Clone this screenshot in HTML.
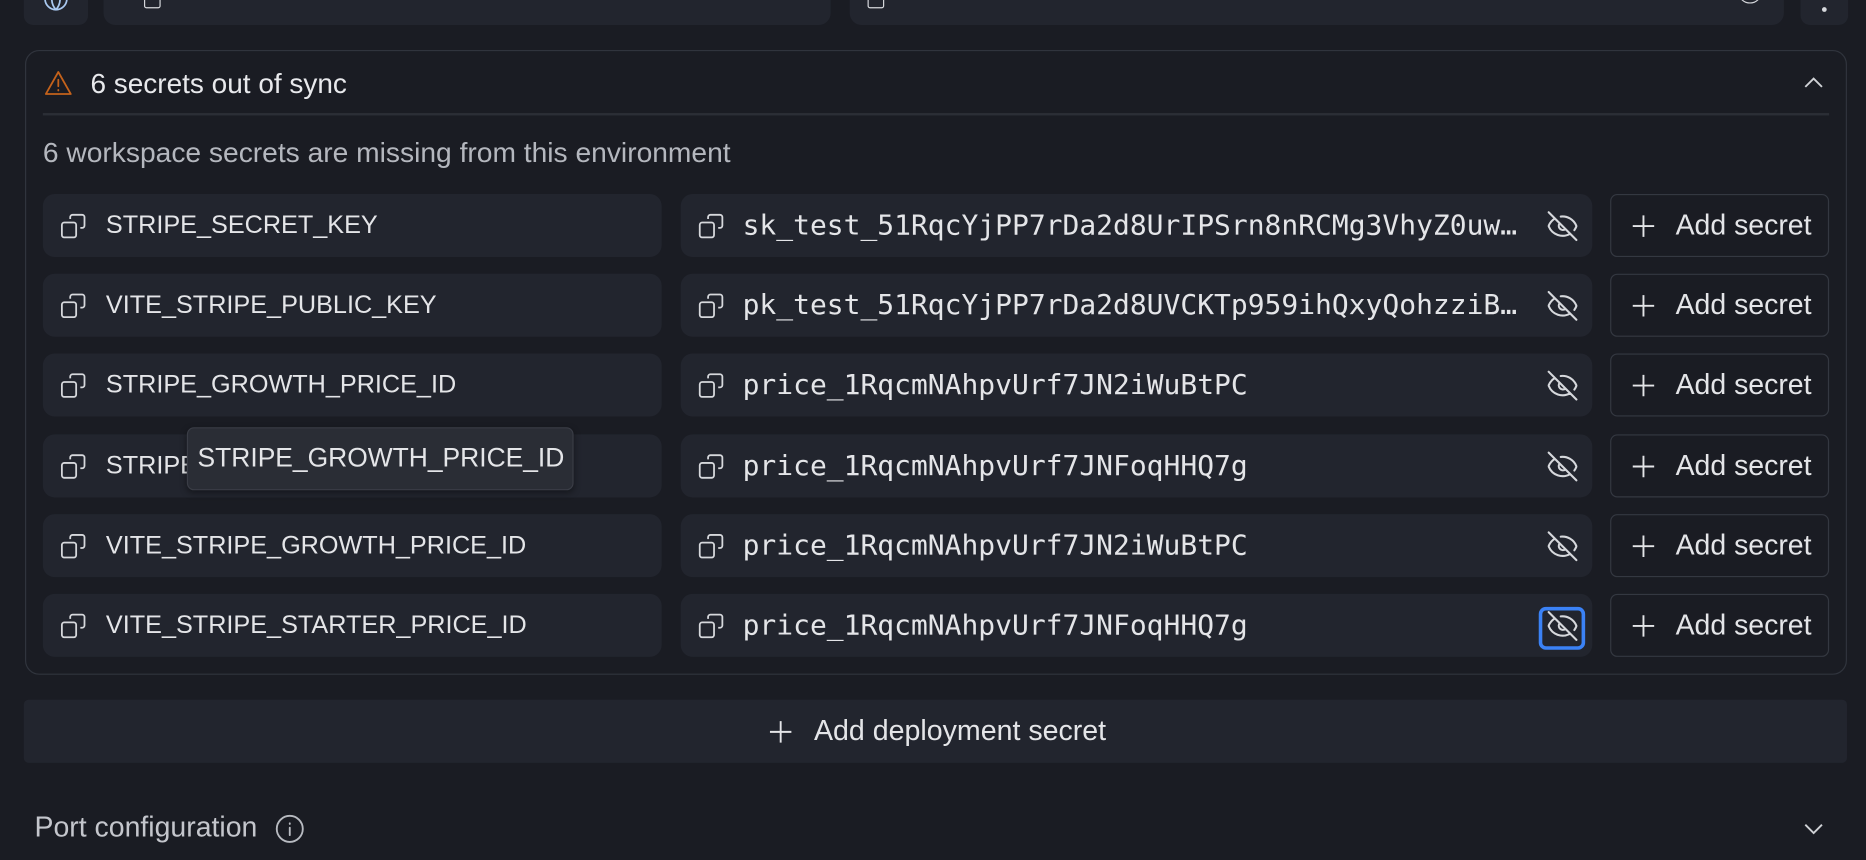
<!DOCTYPE html>
<html><head><meta charset="utf-8"><style>
html,body{margin:0;padding:0;background:#1a1c23;width:1866px;height:860px;overflow:hidden}
#s{position:absolute;left:0;top:0;width:1568px;height:723px;transform:scale(1.19005);transform-origin:0 0;font-family:"Liberation Sans",sans-serif;color:#e4e5e8}
.a{position:absolute}
.box{position:absolute;background:#22252e;border-radius:10px}
.t{position:absolute;white-space:nowrap;font-size:21.2px;line-height:26px}
.mono{font-family:"DejaVu Sans Mono","Liberation Mono",monospace;font-size:23.5px;letter-spacing:0}
.btn{position:absolute;border:1.5px solid #343841;border-radius:6px;box-sizing:border-box;background:#1a1c23}
svg{position:absolute;overflow:visible}
</style></head><body><div id="s">
<div class="box" style="left:20px;top:-20px;width:54px;height:41px;border-radius:8px"></div>
<svg style="left:36px;top:-12px" width="22" height="22" viewBox="0 0 24 24" fill="none" stroke="#a9c8f0" stroke-width="1.6"><circle cx="12" cy="12" r="10"/><path d="M2 12h20M12 2a15 15 0 0 1 0 20M12 2a15 15 0 0 0 0 20"/></svg>
<div class="box" style="left:87px;top:-20px;width:611px;height:41px"></div>
<div class="a" style="left:121px;top:-8px;width:12px;height:13px;border:1.5px solid #d6d8dc;border-radius:2px"></div>
<div class="box" style="left:714px;top:-20px;width:785px;height:41px"></div>
<div class="a" style="left:729px;top:-8px;width:12px;height:13px;border:1.5px solid #d6d8dc;border-radius:2px"></div>
<div class="a" style="left:1461px;top:-8px;width:17px;height:10px;border:1.5px solid #d6d8dc;border-top:none;border-radius:0 0 9px 9px"></div>
<div class="box" style="left:1513px;top:-20px;width:40px;height:41px;border-radius:8px"></div>
<div class="a" style="left:1531px;top:6px;width:4px;height:4px;border-radius:2px;background:#d6d8dc"></div>

<div class="a" style="left:21px;top:42px;width:1531px;height:525px;border:1.5px solid #30343d;border-radius:12px;box-sizing:border-box"></div>
<svg style="left:36px;top:58px" width="26" height="24" viewBox="0 0 24 24" fill="none" stroke="#c4621b" stroke-width="1.5" stroke-linejoin="round"><path d="M12 2.5L22.5 21h-21z"/><path d="M12 9v5.5M12 17.5v.5" stroke-linecap="round"/></svg>
<div class="t" style="left:76px;top:57px;font-size:23.5px;color:#e8e9ec">6 secrets out of sync</div>
<svg style="left:1516px;top:65px" width="16" height="10" viewBox="0 0 16 10" fill="none" stroke="#d0d2d6" stroke-width="1.6"><path d="M1 8l7-7 7 7"/></svg>
<div class="a" style="left:36px;top:95px;width:1501px;height:2px;background:#2b2e36"></div>
<div class="t" style="left:36px;top:116px;font-size:23.7px;color:#b4b7be">6 workspace secrets are missing from this environment</div>

<div id="rows"></div>

<div class="a" style="left:157px;top:359px;width:325px;height:53px;background:#2a2d35;border:1px solid #3a3d46;border-radius:6px;box-sizing:border-box;box-shadow:0 2px 6px rgba(0,0,0,.4)"></div>
<div class="t" style="left:166px;top:372px;font-size:22.2px;color:#e4e5e8">STRIPE_GROWTH_PRICE_ID</div>

<div class="box" style="left:20px;top:588px;width:1532px;height:53px;border-radius:4px"></div>
<svg style="left:646px;top:605px" width="20" height="20" viewBox="0 0 20 20" stroke="#e4e5e8" stroke-width="1.6"><path d="M10 1v18M1 10h18"/></svg>
<div class="t" style="left:684px;top:602px;font-size:24px">Add deployment secret</div>

<div class="t" style="left:29px;top:683px;font-size:23.9px;color:#c4c6cc">Port configuration</div>
<svg style="left:231px;top:684px" width="25" height="25" viewBox="0 0 24 24" fill="none" stroke="#b8bbc1" stroke-width="1.5"><circle cx="12" cy="12" r="10.5"/><path d="M12 11v6M12 7.5v.5" stroke-linecap="round"/></svg>
<svg style="left:1516px;top:691px" width="16" height="10" viewBox="0 0 16 10" fill="none" stroke="#d0d2d6" stroke-width="1.6"><path d="M1 2l7 7 7-7"/></svg>
</div>
<script>
var names=["STRIPE_SECRET_KEY","VITE_STRIPE_PUBLIC_KEY","STRIPE_GROWTH_PRICE_ID","STRIPE_STARTER_PRICE_ID","VITE_STRIPE_GROWTH_PRICE_ID","VITE_STRIPE_STARTER_PRICE_ID"];
var vals=["sk_test_51RqcYjPP7rDa2d8UrIPSrn8nRCMg3VhyZ0uw…","pk_test_51RqcYjPP7rDa2d8UVCKTp959ihQxyQohzziB…","price_1RqcmNAhpvUrf7JN2iWuBtPC","price_1RqcmNAhpvUrf7JNFoqHHQ7g","price_1RqcmNAhpvUrf7JN2iWuBtPC","price_1RqcmNAhpvUrf7JNFoqHHQ7g"];
var copy='<svg width="24" height="24" viewBox="0 0 24 24" fill="none" stroke="#d6d8dc" stroke-width="1.5" style="position:absolute;LEFT;TOP"><rect x="2" y="9" width="12" height="12.5" rx="2"/><path d="M9 6V4.5A2 2 0 0 1 11 2.5h8a2 2 0 0 1 2 2v7a2 2 0 0 1-2 2h-1.5"/></svg>';
var h="";
for(var i=0;i<6;i++){
 var y=163+Math.round(i*67.2);
 h+='<div class="box" style="left:36px;top:'+y+'px;width:520px;height:53px"></div>';
 h+=copy.replace("LEFT","left:50px").replace("TOP","top:"+(y+15)+"px");
 h+='<div class="t" style="left:89px;top:'+(y+14)+'px">'+names[i]+'</div>';
 h+='<div class="box" style="left:572px;top:'+y+'px;width:766px;height:53px"></div>';
 h+=copy.replace("LEFT","left:586px").replace("TOP","top:"+(y+15)+"px");
 h+='<div class="t mono" style="left:624px;top:'+(y+12)+'px;line-height:28px">'+vals[i]+'</div>';
 if(i==5) h+='<div class="a" style="left:1293px;top:'+(y+11)+'px;width:39px;height:36px;border:3px solid #3b82f6;border-radius:6px;box-sizing:border-box"></div>';
 h+='<svg style="left:1299px;top:'+(y+13)+'px" width="28" height="28" viewBox="0 0 24 24" fill="none" stroke="#d6d8dc" stroke-width="1.5" stroke-linecap="round" stroke-linejoin="round"><path d="M10.7 5.1A10.7 10.7 0 0 1 21.9 11.7a1 1 0 0 1 0 .7 10.8 10.8 0 0 1-1.4 2.5M14.1 14.2a3 3 0 0 1-4.2-4.2M17.5 17.5a10.8 10.8 0 0 1-15.4-5.2 1 1 0 0 1 0-.7 10.8 10.8 0 0 1 4.4-5.1M2 2l20 20"/></svg>';
 h+='<div class="btn" style="left:1353px;top:'+y+'px;width:184px;height:53px"></div>';
 h+='<svg style="left:1371px;top:'+(y+17)+'px" width="20" height="20" viewBox="0 0 20 20" stroke="#e4e5e8" stroke-width="1.6"><path d="M10 1v18M1 10h18"/></svg>';
 h+='<div class="t" style="left:1408px;top:'+(y+14)+'px;font-size:23.9px">Add secret</div>';
}
document.getElementById("rows").outerHTML=h;
</script>
</body></html>
